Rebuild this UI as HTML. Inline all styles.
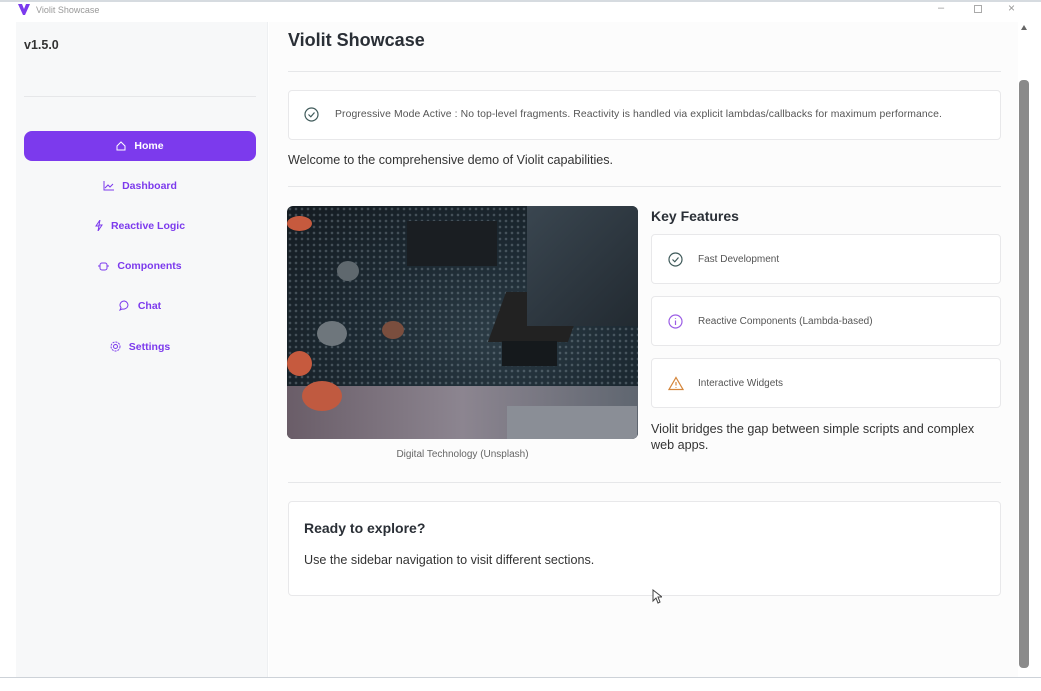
<!DOCTYPE html>
<html><head><meta charset="utf-8"><style>
*{box-sizing:border-box;margin:0;padding:0}
body{width:1041px;height:691px;background:#fff;font-family:"Liberation Sans",sans-serif;position:relative;overflow:hidden;color:#222}
.abs{position:absolute}
.top{left:0;top:0;width:1041px;height:2px;background:#d6dbe0}
.title{left:36px;top:5px;font-size:9px;color:#999}
.side{left:16px;top:22px;width:252px;height:655px;background:#f7f8f9;border-right:1px solid #eef0f2}
.main{left:269px;top:22px;width:749px;height:655px;background:#fcfcfc}
.nav{left:24px;width:232px;height:30px;text-align:center;font-size:10.5px;font-weight:bold;color:#7c3aed;line-height:30px}
.nav svg{vertical-align:-2px;margin-right:8px}
.card{background:#fff;border:1px solid #e8e8ea;border-radius:4px}
.hr{height:1px;background:#e6e7e9}
.feat{left:651px;width:350px;height:50px;font-size:10px;color:#555;line-height:50px;padding-left:46px}
.feat svg{position:absolute;left:16px;top:17px}
.dot{position:absolute;border-radius:50%}
</style></head><body>
<div class="abs top"></div>
<svg class="abs" style="left:18px;top:4px" width="12" height="11" viewBox="0 0 12 11"><path d="M0 0 L4 0 L6 5 L8 0 L12 0 L7 11 L5 11Z" fill="#7c3aed"/></svg>
<div class="abs title">Violit Showcase</div>
<div class="abs" style="left:938px;top:2px;font-size:11px;color:#999">–</div>
<div class="abs" style="left:974px;top:5px;width:8px;height:8px;border:1px solid #aaa"></div>
<div class="abs" style="left:1008px;top:1px;font-size:12px;color:#999">×</div>
<div class="abs side"></div>
<div class="abs main"></div>
<div class="abs" style="left:1019px;top:80px;width:10px;height:588px;background:#8a8a8a;border-radius:4px"></div>
<div class="abs" style="left:1021px;top:25px;width:0;height:0;border-left:3px solid transparent;border-right:3px solid transparent;border-bottom:5px solid #666"></div>
<div class="abs" style="left:0;top:677px;width:1041px;height:1px;background:#cdd2d8"></div>

<div class="abs" style="left:24px;top:38px;font-size:12.5px;font-weight:bold;color:#333">v1.5.0</div>
<div class="abs hr" style="left:24px;top:96px;width:232px"></div>
<div class="abs nav" style="top:131px;background:#7c3aed;color:#fff;border-radius:8px"><svg width="10" height="10" viewBox="0 0 10 10" fill="none" stroke="#fff"><path d="M1 5 L5 1 L9 5 V9 H1Z"/></svg>Home</div>
<div class="abs nav" style="top:171px"><svg width="11" height="10" viewBox="0 0 11 10" fill="none" stroke="#7c3aed"><path d="M1 0V9H11M2 7L5 4L7 6L10 3"/></svg>Dashboard</div>
<div class="abs nav" style="top:211px"><svg width="8" height="11" viewBox="0 0 8 11" fill="none" stroke="#7c3aed"><path d="M5 0L1 6H4L3 11L7 5H4Z"/></svg>Reactive Logic</div>
<div class="abs nav" style="top:251px"><svg width="11" height="9" viewBox="0 0 11 9" fill="none" stroke="#7c3aed"><rect x="2" y="1" width="7" height="7" rx="2"/><path d="M0 4H2M9 4H11"/></svg>Components</div>
<div class="abs nav" style="top:291px"><svg width="11" height="11" viewBox="0 0 11 11" fill="none" stroke="#7c3aed"><path d="M5.5 1A4.5 4 0 1 1 3 9L1 10L2 7.5A4.5 4 0 0 1 5.5 1Z"/></svg>Chat</div>
<div class="abs nav" style="top:332px"><svg width="11" height="11" viewBox="0 0 11 11" fill="none" stroke="#7c3aed"><circle cx="5.5" cy="5.5" r="4.5" stroke-dasharray="2 1"/><circle cx="5.5" cy="5.5" r="2"/></svg>Settings</div>

<div class="abs" style="left:288px;top:30px;font-size:18px;font-weight:bold;color:#2a2f36">Violit Showcase</div>
<div class="abs hr" style="left:288px;top:71px;width:713px"></div>
<div class="abs card" style="left:288px;top:90px;width:713px;height:50px"></div>
<svg class="abs" style="left:304px;top:107px" width="15" height="15" viewBox="0 0 15 15" fill="none" stroke="#3f5a5a" stroke-width="1.2"><circle cx="7.5" cy="7.5" r="6.5"/><path d="M4.5 7.5L6.8 9.8L10.5 5.5"/></svg>
<div class="abs" style="left:335px;top:109px;font-size:10.4px;color:#555;white-space:nowrap;letter-spacing:0.1px">Progressive Mode Active : No top-level fragments. Reactivity is handled via explicit lambdas/callbacks for maximum performance.</div>
<div class="abs" style="left:288px;top:153px;font-size:12.6px;color:#333">Welcome to the comprehensive demo of Violit capabilities.</div>
<div class="abs hr" style="left:288px;top:186px;width:713px"></div>

<div class="abs" style="left:287px;top:206px;width:351px;height:233px;border-radius:6px;overflow:hidden;background:radial-gradient(ellipse at 60% 55%,#2c3c46 0%,#1d2a33 45%,#141b21 100%)">
<div class="abs" style="left:0;top:0;width:351px;height:233px;background-image:radial-gradient(circle,rgba(150,165,175,.35) 1px,transparent 1.6px);background-size:6px 6px"></div>
<div class="abs" style="left:210px;top:86px;width:80px;height:50px;background:#222;transform:skewX(-20deg)"></div>
<div class="abs" style="left:120px;top:15px;width:90px;height:45px;background:#1a1e22"></div>
<div class="abs" style="left:240px;top:0;width:111px;height:120px;background:linear-gradient(135deg,#3a4650,#222a31)"></div>
<div class="abs" style="left:0;top:180px;width:351px;height:53px;background:linear-gradient(90deg,#6a5d68,#8c8590,#5f6670)"></div>
<div class="dot" style="left:0;top:10px;width:25px;height:15px;background:#c65a3e"></div>
<div class="dot" style="left:0;top:145px;width:25px;height:25px;background:#c65a3e"></div>
<div class="dot" style="left:15px;top:175px;width:40px;height:30px;background:#c05a40"></div>
<div class="dot" style="left:30px;top:115px;width:30px;height:25px;background:#6e767c"></div>
<div class="dot" style="left:50px;top:55px;width:22px;height:20px;background:#5f686e"></div>
<div class="dot" style="left:95px;top:115px;width:22px;height:18px;background:#7a4e3e"></div>
<div class="abs" style="left:220px;top:200px;width:130px;height:33px;background:#8a8e96"></div>
<div class="abs" style="left:215px;top:135px;width:55px;height:25px;background:#15191c"></div>
</div>
<div class="abs" style="left:287px;top:449px;width:351px;text-align:center;font-size:10px;color:#666">Digital Technology (Unsplash)</div>

<div class="abs" style="left:651px;top:208px;font-size:14px;font-weight:bold;color:#2a2f36">Key Features</div>
<div class="abs card feat" style="top:234px"><svg width="15" height="15" viewBox="0 0 15 15" fill="none" stroke="#3f5a5a" stroke-width="1.2"><circle cx="7.5" cy="7.5" r="6.5"/><path d="M4.5 7.5L6.8 9.8L10.5 5.5"/></svg>Fast Development</div>
<div class="abs card feat" style="top:296px"><svg width="15" height="15" viewBox="0 0 15 15" fill="none" stroke="#9b5de5" stroke-width="1.2"><circle cx="7.5" cy="7.5" r="6.5"/><path d="M7.5 6.5V11M7.5 4V4.8"/></svg>Reactive Components (Lambda-based)</div>
<div class="abs card feat" style="top:358px"><svg width="16" height="15" viewBox="0 0 16 15" fill="none" stroke="#d4853a" stroke-width="1.2"><path d="M8 1.5L15 13.5H1Z"/><path d="M8 6V9.5M8 11V11.8"/></svg>Interactive Widgets</div>
<div class="abs" style="left:651px;top:421px;width:345px;font-size:12.6px;line-height:16px;color:#333">Violit bridges the gap between simple scripts and complex web apps.</div>

<div class="abs hr" style="left:288px;top:482px;width:713px"></div>
<div class="abs card" style="left:288px;top:501px;width:713px;height:95px"></div>
<div class="abs" style="left:304px;top:520px;font-size:14px;font-weight:bold;color:#2a2f36">Ready to explore?</div>
<div class="abs" style="left:304px;top:553px;font-size:12.6px;color:#333">Use the sidebar navigation to visit different sections.</div>
<svg class="abs" style="left:652px;top:589px" width="10" height="15" viewBox="0 0 10 15"><path d="M1 1V12L4 9L6 14L8 13L6 8H10Z" fill="#fff" stroke="#444"/></svg>
</body></html>
